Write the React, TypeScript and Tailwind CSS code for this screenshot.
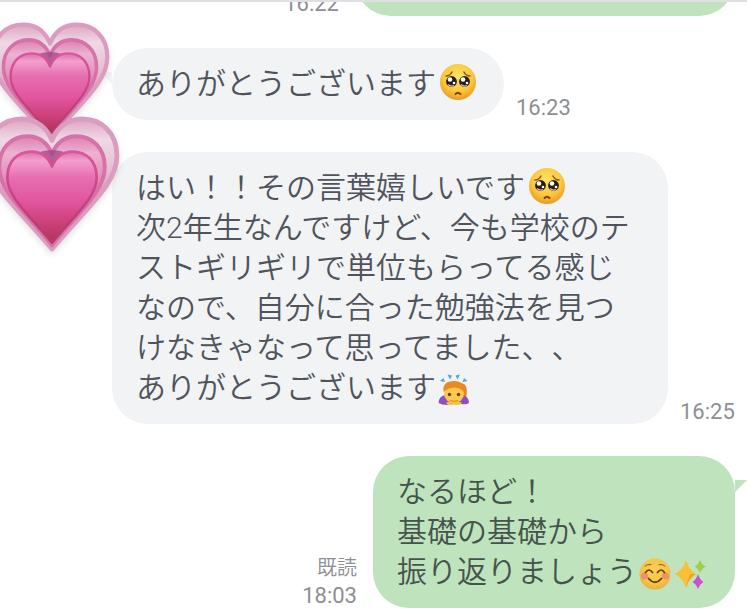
import React from 'react';

const HEART = 'M67 134 C30 90 0 67 0 38 C0 14 16 0 36 0 C52 0 62 10 67 22 C72 10 82 0 98 0 C118 0 134 14 134 38 C134 67 104 90 67 134Z';

const GrowingHeart: React.FC<{ id: string; className: string }> = ({ id, className }) => (
  <svg className={`drop-shadow-md ${className}`} viewBox="0 0 134 134" role="img" aria-label="growing heart">
    <defs>
      <linearGradient id={`${id}-outer`} x1="0" y1="0" x2="0" y2="1">
        <stop offset="0" stopColor="#dda5c4" />
        <stop offset="0.16" stopColor="#efd9e5" />
        <stop offset="0.35" stopColor="#e8c3d7" />
        <stop offset="0.55" stopColor="#dfa4c5" />
        <stop offset="1" stopColor="#d391b0" />
      </linearGradient>
      <linearGradient id={`${id}-middle`} x1="0" y1="0" x2="0" y2="1">
        <stop offset="0" stopColor="#dd7fb3" />
        <stop offset="0.15" stopColor="#ecb2d1" />
        <stop offset="0.5" stopColor="#dd7cb1" />
        <stop offset="1" stopColor="#c4608b" />
      </linearGradient>
      <linearGradient id={`${id}-inner`} x1="0" y1="0" x2="0" y2="1">
        <stop offset="0" stopColor="#e06aac" />
        <stop offset="0.1" stopColor="#f2a0ce" />
        <stop offset="0.28" stopColor="#e66fb0" />
        <stop offset="0.55" stopColor="#e0559f" />
        <stop offset="0.75" stopColor="#cf437f" />
        <stop offset="1" stopColor="#b03358" />
      </linearGradient>
      <linearGradient id={`${id}-edge`} x1="0" y1="0" x2="0" y2="1">
        <stop offset="0" stopColor="#d8569b" />
        <stop offset="0.5" stopColor="#cb4287" />
        <stop offset="1" stopColor="#b53a66" />
      </linearGradient>
    </defs>
    <path d={HEART} fill={`url(#${id}-outer)`} transform="translate(3 3) scale(0.955)" />
    <path d={HEART} fill="none" stroke="#da9cbf" strokeWidth="5" strokeLinejoin="round" transform="translate(3 3) scale(0.955)" />
    <path d={HEART} fill={`url(#${id}-middle)`} transform="translate(15 20) scale(0.776 0.8)" />
    <path d={HEART} fill="none" stroke="#d772a8" strokeWidth="5" strokeLinejoin="round" transform="translate(15 20) scale(0.776 0.8)" />
    <path d="M53 36Q67 31 81 36L67 54Z" fill="#a04484" opacity="0.75" />
    <path d={HEART} fill={`url(#${id}-inner)`} transform="translate(23 35) scale(0.657 0.67)" />
    <path d={HEART} fill="none" stroke={`url(#${id}-edge)`} strokeWidth="4" strokeLinejoin="round" transform="translate(23 35) scale(0.657 0.67)" />
  </svg>
);

const PleadingFace: React.FC = () => (
  <svg className="inline-block w-9 h-9 ml-1 -mt-3 -mb-1 align-middle" viewBox="0 0 36 36" role="img" aria-label="pleading face">
    <defs>
      <radialGradient id="pleading" cx="0.5" cy="0.35" r="0.65">
        <stop offset="0" stopColor="#ffe36a" />
        <stop offset="0.6" stopColor="#fcc93f" />
        <stop offset="1" stopColor="#eb9a25" />
      </radialGradient>
    </defs>
    <circle cx="18" cy="18" r="18" fill="url(#pleading)" />
    <path d="M6 12Q10 12 12 8M30 12Q26 12 24 8" fill="none" stroke="#8b541c" strokeWidth="1.5" strokeLinecap="round" />
    <circle cx="11.5" cy="17.5" r="5.4" fill="#2b1c12" />
    <circle cx="24.5" cy="17.5" r="5.4" fill="#2b1c12" />
    <circle cx="10" cy="15.5" r="2.3" fill="#fff" />
    <circle cx="23" cy="15.5" r="2.3" fill="#fff" />
    <circle cx="14" cy="19" r="1.3" fill="#fff" />
    <circle cx="27" cy="19" r="1.3" fill="#fff" />
    <path d="M8 20.5Q11 23 14 21.5M21 20.5Q24 23 27 21.5" fill="none" stroke="#cfc5bb" strokeWidth="1.2" />
    <path d="M15.5 30Q18 27.5 20.5 30" fill="none" stroke="#7a3f12" strokeWidth="1.8" strokeLinecap="round" />
  </svg>
);

const BowingWoman: React.FC = () => (
  <svg className="inline-block w-8 h-8 ml-0.5 -my-1 align-middle" viewBox="0 0 32 32" role="img" aria-label="woman bowing">
    <path d="M2 7L5.500 4L7 8ZM9.500 0.500L14 1.500L12 5.500ZM17.500 1.500L22 0.500L19.500 5.500ZM26 4L29.500 7L24.500 8Z" fill="#4ba9d8" />
    <path d="M23 9Q31 10 28 24L22 23Z" fill="#e98724" />
    <path d="M23 9Q26 12 24 20L22 17Z" fill="#cf5f1d" />
    <path d="M0.500 29Q1 22 7 21H25Q31 23 31 29Q28 31 23 30L16 28L9 31Q4 31 0.500 29Z" fill="#8d4fc4" />
    <ellipse cx="16" cy="20" rx="10" ry="9" fill="#fbc94d" />
    <path d="M5.500 18Q4 7 16 7Q27 7 26 18Q23 14 17 13.500Q9 14 5.500 18Z" fill="#ea8a27" />
    <circle cx="11.500" cy="20.500" r="1.700" fill="#60422c" />
    <circle cx="20.500" cy="20.500" r="1.700" fill="#60422c" />
    <path d="M8 29Q12 26 16 28.500Q20 26 24 29Q22 32 16 30.500Q10 32 8 29Z" fill="#f8bf45" />
    <path d="M12 26.500Q16 28 20 26.500" fill="none" stroke="#d58b22" />
  </svg>
);

const SmilingFace: React.FC = () => (
  <svg className="inline-block w-8 h-8 ml-0.5 -my-1 align-middle" viewBox="0 0 32 32" role="img" aria-label="smiling face">
    <defs>
      <radialGradient id="smiling" cx="0.5" cy="0.4" r="0.6">
        <stop offset="0" stopColor="#fbd04f" />
        <stop offset="0.7" stopColor="#f8c344" />
        <stop offset="1" stopColor="#ecad37" />
      </radialGradient>
    </defs>
    <circle cx="16" cy="16" r="15.500" fill="url(#smiling)" />
    <circle cx="5.500" cy="18" r="3.500" fill="#f08f69" />
    <circle cx="26.500" cy="18" r="3.500" fill="#f08f69" />
    <path d="M6 8Q8 6 12 6.500M26 8Q24 6 20 6.500" fill="none" stroke="#8a5a28" strokeLinecap="round" />
    <path d="M6.500 14.500Q10 9.500 13.500 14.500M18.500 14.500Q22 9.500 25.500 14.500" fill="none" stroke="#5e3f22" strokeWidth="1.700" strokeLinecap="round" />
    <path d="M9.500 20.500Q16 28 22.500 20.500" fill="none" stroke="#5e3f22" strokeWidth="1.800" strokeLinecap="round" />
  </svg>
);

const Sparkles: React.FC = () => (
  <svg className="inline-block w-8 h-8 ml-1 -my-1 align-middle" viewBox="0 0 32 32" role="img" aria-label="sparkles">
    <path d="M11 2Q14 12 21 16Q14 20 11 30Q8 20 0 16Q8 12 11 2Z" fill="#f9bf36" />
    <path d="M11 30Q14 20 21 16L15 16Q13 21 11 30Z" fill="#eaa62b" />
    <path d="M25 2Q27 7 31 8.500Q27 10 25 15Q23 10 19.500 8.500Q23 7 25 2Z" fill="#a0cf45" />
    <path d="M23 16Q25 22 28.500 24Q25 26 23 31Q21 26 17.500 24Q21 22 23 16Z" fill="#c94fd3" />
  </svg>
);

interface MessageProps {
  time: string;
  mine?: boolean;
  read?: boolean;
  tail?: boolean;
  children?: React.ReactNode;
}

const Message: React.FC<MessageProps> = ({ time, mine, read, tail, children }) => (
  <div className={`flex items-end ${mine ? 'flex-row-reverse gap-4 pr-3' : 'gap-3 pl-28'}`}>
    <div
      className={`relative shrink-0 max-w-139 min-h-18 rounded-[36px] pl-6 pr-7 py-4 text-[30px] leading-10 ${
        mine ? 'bg-[#bfe3bc] text-[#46534d]' : 'bg-[#f1f3f5] text-[#50535b]'
      }`}
    >
      {tail && (
        <svg
          className={`absolute top-6 w-3 h-3 ${mine ? 'left-full' : 'right-full -scale-x-100'}`}
          viewBox="0 0 12 12"
          fill={mine ? '#bfe3bc' : '#f1f3f5'}
        >
          <path d="M0 0H12L0 12Z" />
        </svg>
      )}
      {children}
    </div>
    <div className="text-right text-[#8d8f94]">
      {read && <div className="text-xl leading-8">既読</div>}
      <time className="block text-[22px] leading-6 font-normal">{time}</time>
    </div>
  </div>
);

const App: React.FC = () => {
  return (
    <main className="relative min-h-screen overflow-hidden bg-white font-[350] font-['Roboto','Noto_Sans_CJK_JP',sans-serif] [text-spacing-trim:space-all]">
      {/* Earlier message, scrolled under the top edge */}
      <div className="flex flex-col justify-end h-4 overflow-hidden">
        <Message time="16:22" mine>
          <div className="w-82" />
        </Message>
      </div>
      <div className="absolute inset-x-0 top-0 h-0.5 bg-[#dfdfe4]" />

      <div className="flex flex-col gap-8 pt-8">
        <Message time="16:23" tail>
          <p>ありがとうございます<PleadingFace /></p>
        </Message>

        <Message time="16:25">
          <p>
            はい！！その言葉嬉しいです<PleadingFace /><br />
            次2年生なんですけど、今も学校のテストギリギリで単位もらってる感じなので、自分に合った勉強法を見つけなきゃなって思ってました、、<br />
            ありがとうございます<BowingWoman />
          </p>
        </Message>

        <Message time="18:03" mine read tail>
          <p>
            なるほど！<br />
            基礎の基礎から<br />
            振り返りましょう<SmilingFace /><Sparkles />
          </p>
        </Message>
      </div>

      {/* Hearts covering the sender's avatar */}
      <GrowingHeart id="heart-top" className="absolute -left-2.5 top-5.5 w-30 h-30" />
      <GrowingHeart id="heart-bottom" className="absolute -left-4 top-29 w-34 h-34" />
    </main>
  );
};

export default App;
